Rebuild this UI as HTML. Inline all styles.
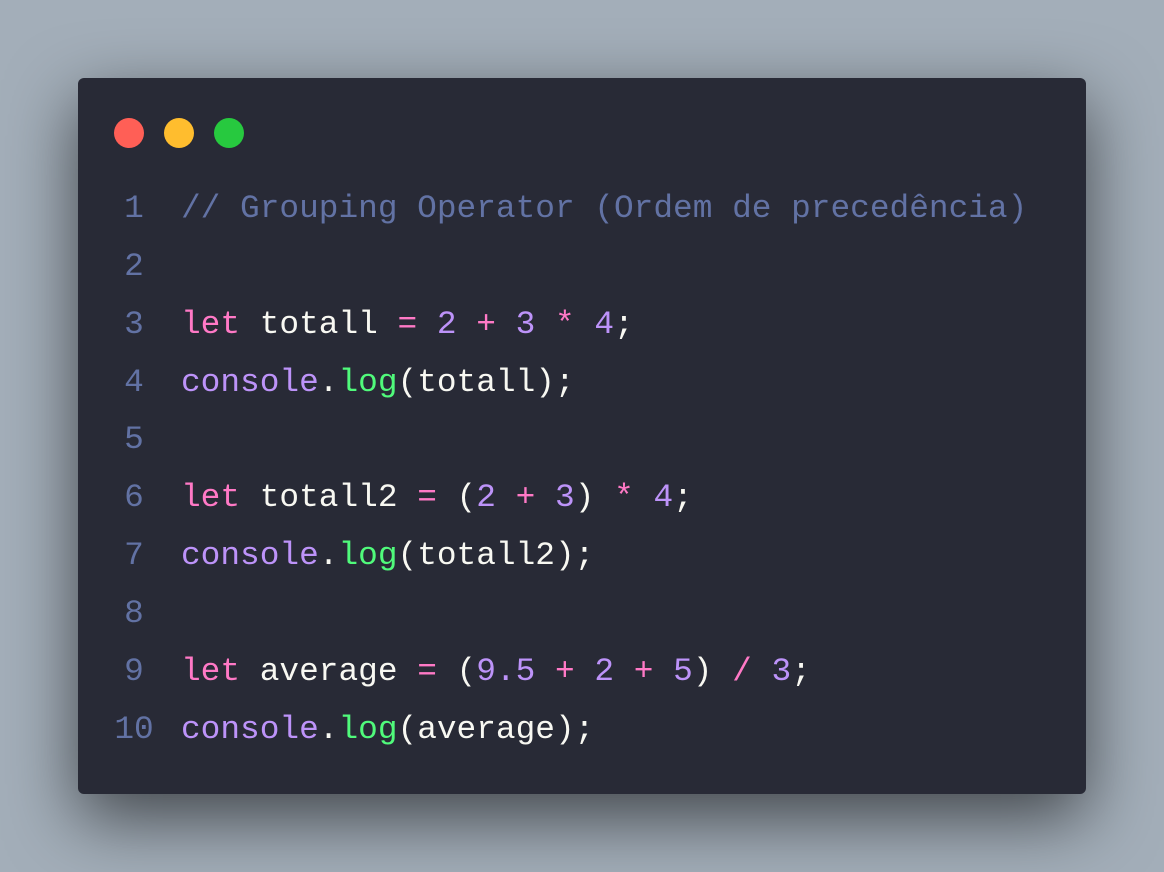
<!DOCTYPE html>
<html><head><meta charset="utf-8"><style>
html,body{margin:0;padding:0;width:1164px;height:872px;overflow:hidden;background:#a3aeb9;}
.win{position:absolute;left:78px;top:78px;width:1008px;height:716px;background:#282a36;border-radius:6px;box-shadow:0 24px 70px rgba(0,0,0,0.6);}
.dot{position:absolute;top:40px;width:30px;height:30px;border-radius:50%;}
.l{position:absolute;left:0;height:58px;line-height:58px;font-family:"Liberation Mono",monospace;font-size:32.8px;white-space:pre;color:#f8f8f2;}
.n{position:absolute;left:34px;width:44px;text-align:center;color:#6272a4;}
.c{position:absolute;left:103px;}
.cm{color:#6272a4}.k{color:#ff79c6}.p{color:#bd93f9}.g{color:#50fa7b}
</style></head><body>
<div class="win">
<div class="dot" style="left:36px;background:#ff5f56"></div>
<div class="dot" style="left:86px;background:#ffbd2e"></div>
<div class="dot" style="left:136px;background:#27c93f"></div>
<div class="l" style="top:102px"><span class="n">1</span><span class="c cm">// Grouping Operator (Ordem de precedência)</span></div>
<div class="l" style="top:160px"><span class="n">2</span></div>
<div class="l" style="top:218px"><span class="n">3</span><span class="c"><span class="k">let</span> totall <span class="k">=</span> <span class="p">2</span> <span class="k">+</span> <span class="p">3</span> <span class="k">*</span> <span class="p">4</span>;</span></div>
<div class="l" style="top:276px"><span class="n">4</span><span class="c"><span class="p">console</span>.<span class="g">log</span>(totall);</span></div>
<div class="l" style="top:333px"><span class="n">5</span></div>
<div class="l" style="top:391px"><span class="n">6</span><span class="c"><span class="k">let</span> totall2 <span class="k">=</span> (<span class="p">2</span> <span class="k">+</span> <span class="p">3</span>) <span class="k">*</span> <span class="p">4</span>;</span></div>
<div class="l" style="top:449px"><span class="n">7</span><span class="c"><span class="p">console</span>.<span class="g">log</span>(totall2);</span></div>
<div class="l" style="top:507px"><span class="n">8</span></div>
<div class="l" style="top:565px"><span class="n">9</span><span class="c"><span class="k">let</span> average <span class="k">=</span> (<span class="p">9.5</span> <span class="k">+</span> <span class="p">2</span> <span class="k">+</span> <span class="p">5</span>) <span class="k">/</span> <span class="p">3</span>;</span></div>
<div class="l" style="top:623px"><span class="n">10</span><span class="c"><span class="p">console</span>.<span class="g">log</span>(average);</span></div>
</div>
</body></html>
